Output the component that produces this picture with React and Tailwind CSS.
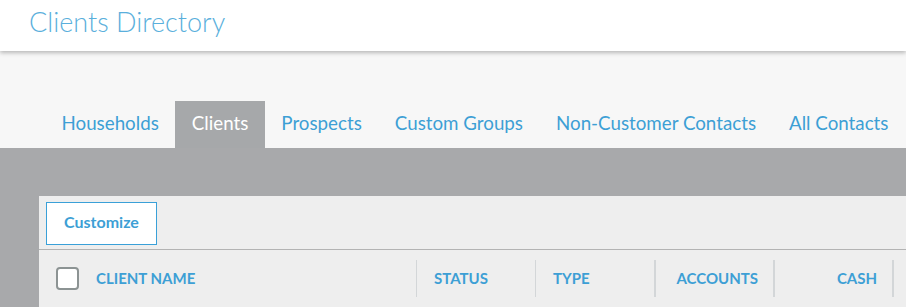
import React from 'react';

const tabs = ['Households', 'Clients', 'Prospects', 'Custom Groups', 'Non-Customer Contacts', 'All Contacts'];

const cols = [
  { label: 'STATUS', align: 'left', thick: false },
  { label: 'TYPE', align: 'left', thick: false },
  { label: 'ACCOUNTS', align: 'right', thick: true },
  { label: 'CASH', align: 'right', thick: true },
];

export default function App() {
  return (
    <div className="w-[906px] h-[307px] overflow-hidden bg-[#a8a9ab] font-['Lato',sans-serif]">
      {/* title bar */}
      <div className="relative z-10 h-[51px] bg-white shadow-[0_2px_4px_rgba(0,0,0,0.25)] pl-[29px] pt-[4px]">
        <h1 className="text-[27px] font-light leading-[35px] text-[#5aafdc]">Clients Directory</h1>
      </div>

      {/* tabs */}
      <div className="bg-[#f7f7f7] h-[97px] pl-[45px] flex items-end">
        {tabs.map((t) => (
          <div
            key={t}
            className={
              t === 'Clients'
                ? 'h-[47px] px-[16.5px] pb-[2px] flex items-center text-[18.75px] text-white bg-[#a6a8aa] whitespace-nowrap'
                : 'h-[47px] px-[16.5px] pb-[2px] flex items-center text-[18.75px] text-[#3d9fd5] whitespace-nowrap'
            }
          >
            {t}
          </div>
        ))}
      </div>

      {/* panel */}
      <div className="mt-[48px] ml-[39px] w-[1200px] h-[200px] bg-[#eeeeee]">
        <div className="h-[54px] pl-[7px] pt-[6px] border-b border-[#b3b3b3]">
          <button className="w-[111px] h-[43px] pb-[3px] bg-white border border-[#3aa0d8] text-[16px] font-bold text-[#3d9fd5]">
            Customize
          </button>
        </div>
        <div className="flex h-[56px] items-center">
          <div className="w-[377px] h-full flex items-center pl-[17px]">
            <span className="w-[23px] h-[23px] rounded-[4px] border-2 border-[#8c9393] bg-white"></span>
            <span className="ml-[17px] text-[15px] font-bold text-[#3d9fd5]">CLIENT NAME</span>
          </div>
          {cols.map((c) => (
            <div key={c.label} className="w-[119px] h-full flex items-center relative">
              <span className={c.thick ? 'w-[2px] h-[37px] bg-[#d3d6d8]' : 'w-px h-[37px] bg-[#d3d6d8]'}></span>
              <span
                className={
                  c.align === 'right'
                    ? 'flex-1 text-right pr-[15px] text-[15px] font-bold text-[#3d9fd5]'
                    : 'flex-1 pl-[17px] text-[15px] font-bold text-[#3d9fd5]'
                }
              >
                {c.label}
              </span>
            </div>
          ))}
          <span className="w-[2px] h-[37px] bg-[#d3d6d8]"></span>
        </div>
      </div>
    </div>
  );
}
